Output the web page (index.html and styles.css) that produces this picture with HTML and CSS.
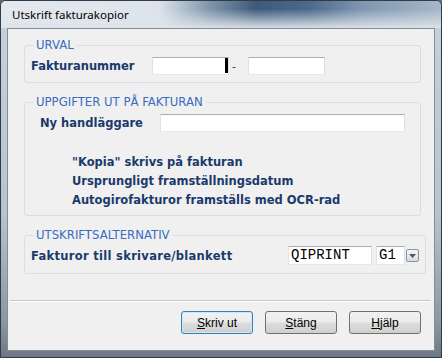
FILE: index.html
```html
<!DOCTYPE html>
<html lang="sv">
<head>
  <meta charset="UTF-8">
  <title>Utskrift fakturakopior</title>
  <link rel="stylesheet" href="styles.css">
</head>
<body>
<div class="window">
  <div class="titlebar">Utskrift fakturakopior</div>
  <div class="client">
    <fieldset class="group group-urval">
      <legend>URVAL</legend>
      <div class="row">
        <label class="label label-num">Fakturanummer</label>
        <span class="field field-num"><span class="caret"></span></span>
        <span class="dash">-</span>
        <span class="field field-num"></span>
      </div>
    </fieldset>

    <fieldset class="group group-info">
      <legend>UPPGIFTER UT PÅ FAKTURAN</legend>
      <div class="row">
        <label class="label label-handl">Ny handläggare</label>
        <span class="field field-handl"></span>
      </div>
      <div class="notes">
        <div class="label">"Kopia" skrivs på fakturan</div>
        <div class="label">Ursprungligt framställningsdatum</div>
        <div class="label">Autogirofakturor framställs med OCR-rad</div>
      </div>
    </fieldset>

    <fieldset class="group group-print">
      <legend>UTSKRIFTSALTERNATIV</legend>
      <div class="row row-print">
        <label class="label label-print">Fakturor till skrivare/blankett</label>
        <span class="field field-printer">QIPRINT</span>
        <span class="field field-form">G1</span>
        <span class="drop"><svg width="7" height="4" viewBox="0 0 7 4"><path d="M0 0h7L3.5 4z" fill="#4d5560"/></svg></span>
      </div>
    </fieldset>

    <div class="separator"></div>

    <div class="buttons">
      <button class="btn btn-default"><u>S</u>kriv ut</button>
      <button class="btn"><u>S</u>täng</button>
      <button class="btn"><u>H</u>jälp</button>
    </div>
  </div>
</div>
</body>
</html>
```

FILE: styles.css
```css
* {
  margin: 0;
  padding: 0;
  box-sizing: border-box;
}
body {
  width: 442px;
  height: 358px;
  overflow: hidden;
  background: #5a6b7c;
  font-family: "DejaVu Sans", Verdana, sans-serif;
}
.window {
  width: 442px;
  height: 358px;
  border: 1px solid #2f3d4b;
  border-radius: 6px 6px 0 0;
  padding: 0 6px 6px 6px;
  display: flex;
  flex-direction: column;
  background: linear-gradient(to bottom, #c9d2db 0%, #b9c3cd 60%, #8c97a2 90%, #6d7884 100%);
}
.titlebar {
  height: 27px;
  margin: 0 -6px;
  padding: 6px 0 0 11px;
  border-radius: 5px 5px 0 0;
  font-family: "Noto Sans", sans-serif;
  font-size: 11.5px;
  line-height: 16px;
  color: #000;
  background:
    linear-gradient(to bottom, rgba(255,255,255,0) 30%, rgba(222,228,234,0.95) 100%),
    linear-gradient(90deg, #e4e9ee 0%, #dce3ea 36%, #8398ae 47%, #3d5a7a 58%, #4c6989 70%, #7f97b1 82%, #a6b7c9 100%);
}
.client {
  flex: 1;
  background: #f0f0f0;
  border: 1px solid #838e99;
  padding: 9px 13px 0 16px;
}
.group {
  border: 1px solid #d5dfe5;
  border-radius: 3px;
  padding: 5px 6px 7px 6px;
}
.group legend {
  margin-left: 2px;
  padding: 0 3px;
  font-size: 11.7px;
  line-height: 14px;
  color: #3a6cc0;
}
.group-info {
  margin-top: 12px;
  padding-bottom: 5px;
}
.group-print {
  margin-top: 12px;
  padding-top: 4px;
  padding-bottom: 8px;
}
.row {
  display: flex;
  align-items: center;
  height: 18px;
}
.label {
  font-size: 11.5px;
  font-weight: bold;
  color: #1a3a6c;
  white-space: nowrap;
}
.label-num {
  width: 121px;
}
.label-handl {
  width: 120px;
  margin-left: 9px;
}
.label-print {
  width: 257px;
  letter-spacing: 0.3px;
}
.field {
  position: relative;
  display: block;
  height: 18px;
  background: #fff;
  border: 1px solid;
  border-color: #abadb3 #dbdfe6 #e3e9ef #e2e3ea;
}
.field-num {
  width: 77px;
}
.caret {
  position: absolute;
  right: 0;
  top: 0;
  width: 3px;
  height: 15px;
  background: #000;
}
.dash {
  width: 19px;
  padding-left: 3px;
  font-size: 11px;
  color: #333;
}
.field-handl {
  width: 245px;
}
.notes {
  margin-top: 21px;
  padding-left: 41px;
  line-height: 19px;
}
.row-print {
  height: 19px;
}
.field-printer,
.field-form {
  height: 19px;
  padding-left: 2px;
  font-family: "Liberation Mono", "Courier New", monospace;
  font-size: 14px;
  line-height: 17px;
  color: #000;
}
.field-printer {
  width: 84px;
}
.field-form {
  width: 29px;
  margin-left: 4px;
}
.drop {
  display: flex;
  align-items: center;
  justify-content: center;
  width: 13px;
  height: 13px;
  margin-left: 1px;
  border: 1px solid #8d949c;
  border-radius: 2px;
  background: linear-gradient(#f4f6f8, #d6dbe0);
}
.separator {
  margin: 26px -10px 0 -14px;
  border-top: 1px solid #c5c5c5;
  border-bottom: 1px solid #fff;
}
.buttons {
  display: flex;
  justify-content: flex-end;
  gap: 12px;
  margin-top: 9px;
}
.btn {
  width: 72px;
  height: 23px;
  border: 1px solid #707070;
  border-radius: 3px;
  background: linear-gradient(#f2f2f2 0%, #ebebeb 48%, #dddddd 52%, #cfcfcf 100%);
  font-family: "Liberation Sans", Arial, sans-serif;
  font-size: 12px;
  color: #000;
}
.btn-default {
  border-color: #3c7fb1;
  box-shadow: inset 0 0 0 1px #cbe9fa;
}
```
